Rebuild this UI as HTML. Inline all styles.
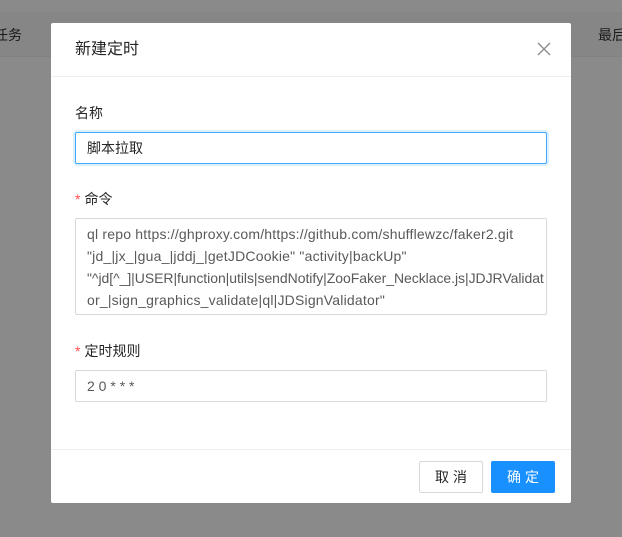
<!DOCTYPE html>
<html><head><meta charset="utf-8"><style>
*{box-sizing:border-box;margin:0;padding:0}
body{width:622px;height:537px;overflow:hidden;background:#8a8a8a;font-family:"Liberation Sans","Noto Sans CJK SC",sans-serif;font-size:14px;position:relative}
.bg1{position:absolute;left:0;top:12px;width:622px;height:45px;background:#868686;border-bottom:1px solid #828282}
.bgt{position:absolute;top:25px;color:#1a1a1a;font-size:14px;white-space:nowrap}
.modal{position:absolute;left:51px;top:23px;width:520px;height:480px;background:#fff;border-radius:2px}
.hd{height:54px;border-bottom:1px solid #eee;padding:17px 24px;font-size:16px;color:#262626;line-height:20px}
.x{position:absolute;left:486px;top:19px;width:14px;height:14px}
.lbl{position:absolute;left:24px;color:#262626;line-height:20px}
.lbl b{color:#ff4d4f;font-weight:normal;margin-right:4px;font-family:"Liberation Sans",sans-serif}
.inp{position:absolute;left:24px;width:472px;border:1px solid #d9d9d9;border-radius:2px;padding:0 11px;color:#595959;line-height:22px}
.ta div{white-space:nowrap;overflow:visible;letter-spacing:0.2px}
.ft{position:absolute;left:0;top:426px;width:520px;border-top:1px solid #eee}
.btn{position:absolute;top:438px;width:64px;height:32px;border-radius:2px;text-align:center;line-height:30px;letter-spacing:4px;padding-left:4px}
</style></head><body>
<div class="bg1"></div>
<div class="bgt" style="left:-6px">任务</div>
<div class="bgt" style="left:598px">最后</div>
<div class="modal">
<div class="hd">新建定时</div>
<svg class="x" viewBox="0 0 14 14"><path d="M1 1L13 13M13 1L1 13" stroke="#8c8c8c" stroke-width="1.3"/></svg>
<div class="lbl" style="top:80px">名称</div>
<div class="inp" style="top:109px;height:32px;border-color:#40a9ff;box-shadow:0 0 0 2px rgba(24,144,255,.15);padding-top:4px;color:#262626">脚本拉取</div>
<div class="lbl" style="top:166px"><b>*</b>命令</div>
<div class="inp ta" style="top:195px;height:97px;padding-top:4px">
<div>ql repo https://ghproxy.com/https://github.com/shufflewzc/faker2.git</div>
<div>"jd_|jx_|gua_|jddj_|getJDCookie" "activity|backUp"</div>
<div style="letter-spacing:-0.05px">"^jd[^_]|USER|function|utils|sendNotify|ZooFaker_Necklace.js|JDJRValidat</div>
<div>or_|sign_graphics_validate|ql|JDSignValidator"</div>
</div>
<div class="lbl" style="top:318px"><b>*</b>定时规则</div>
<div class="inp" style="top:347px;height:32px;padding-top:4px">2 0 * * *</div>
<div class="ft"></div>
<div class="btn" style="left:368px;border:1px solid #d9d9d9;color:#262626">取消</div>
<div class="btn" style="left:440px;background:#1890ff;color:#fff;border:1px solid #1890ff">确定</div>
</div>
</body></html>
